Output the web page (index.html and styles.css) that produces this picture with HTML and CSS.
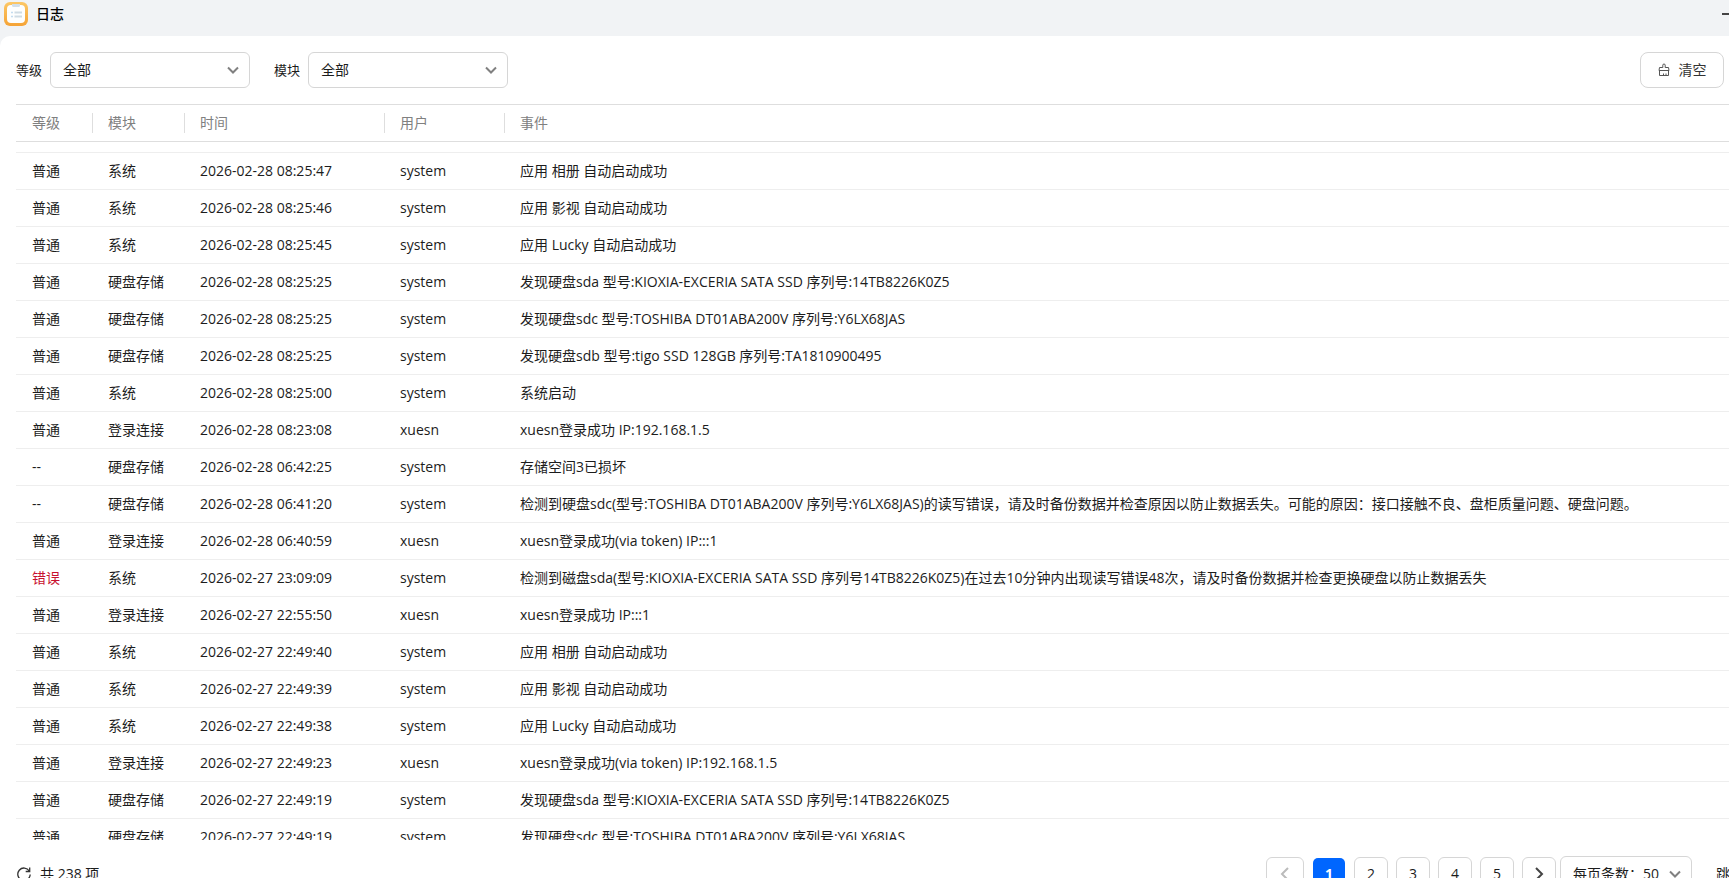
FILE: index.html
```
<!DOCTYPE html>
<html lang="zh-CN">
<head>
<meta charset="utf-8">
<title>日志</title>
<link rel="stylesheet" href="styles.css">
</head>
<body>
<header class="titlebar">
  <svg class="app-icon" width="24" height="24" viewBox="0 0 24 24" aria-hidden="true">
    <defs><linearGradient id="amber" x1="0" y1="0" x2="0" y2="1"><stop offset="0" stop-color="#fcc766"/><stop offset="1" stop-color="#f5a336"/></linearGradient></defs>
    <rect width="24" height="24" rx="6" fill="url(#amber)"/>
    <rect x="3" y="3" width="18" height="18" rx="4" fill="#fdfefe"/>
    <path d="M8 2h8v1.500a1.500 1.500 0 0 1-1.500 1.500h-5A1.500 1.500 0 0 1 8 3.500z" fill="#d3dfe9"/>
    <path d="M7 10.500h2M7 14.500h2" stroke="#c3dcef" stroke-width="1.500"/>
    <path d="M10.500 10.500H18M10.500 14.500H18" stroke="#cfdbe3" stroke-width="2"/>
  </svg>
  <h1 class="title">日志</h1>
  <button class="minimize" type="button" aria-label="Minimize"><svg width="7" height="2" viewBox="0 0 7 2"><path d="M0 1h7" stroke="#444" stroke-width="2"/></svg></button>
</header>
<main class="panel">
  <form class="toolbar">
    <label class="label" for="level">等级</label>
    <span class="select-wrap filter"><select class="select" id="level"><option>全部</option></select><svg class="chevron" width="12" height="8" viewBox="0 0 12 8"><path d="M1 1.500l5 5 5-5" /></svg></span>
    <label class="label second" for="module">模块</label>
    <span class="select-wrap filter"><select class="select" id="module"><option>全部</option></select><svg class="chevron" width="12" height="8" viewBox="0 0 12 8"><path d="M1 1.500l5 5 5-5" /></svg></span>
    <button class="clear" type="button"><svg width="12" height="14" viewBox="0 0 12 14" fill="none" stroke="#555" stroke-width="1"><path d="M4.800 4.500V2.200a1.200 1.200 0 0 1 2.400 0v2.300H10.500l.5 3H1l.5-3zM1.500 7.500v5h9v-5M5.500 12.500v-2M8 12.500v-2"/></svg>清空</button>
  </form>
  <div class="log">
    <table class="table">
      <colgroup><col class="c-level"><col class="c-module"><col class="c-time"><col class="c-user"><col></colgroup>
      <thead><tr><th>等级</th><th>模块</th><th>时间</th><th>用户</th><th>事件</th></tr></thead>
      <tbody>
        <tr class="scrolled"><td colspan="5"></td></tr>
        <tr><td>普通</td><td>系统</td><td>2026-02-28 08:25:47</td><td>system</td><td>应用 相册 自动启动成功</td></tr>
        <tr><td>普通</td><td>系统</td><td>2026-02-28 08:25:46</td><td>system</td><td>应用 影视 自动启动成功</td></tr>
        <tr><td>普通</td><td>系统</td><td>2026-02-28 08:25:45</td><td>system</td><td>应用 Lucky 自动启动成功</td></tr>
        <tr><td>普通</td><td>硬盘存储</td><td>2026-02-28 08:25:25</td><td>system</td><td>发现硬盘sda 型号:KIOXIA-EXCERIA SATA SSD 序列号:14TB8226K0Z5</td></tr>
        <tr><td>普通</td><td>硬盘存储</td><td>2026-02-28 08:25:25</td><td>system</td><td>发现硬盘sdc 型号:TOSHIBA DT01ABA200V 序列号:Y6LX68JAS</td></tr>
        <tr><td>普通</td><td>硬盘存储</td><td>2026-02-28 08:25:25</td><td>system</td><td>发现硬盘sdb 型号:tigo SSD 128GB 序列号:TA1810900495</td></tr>
        <tr><td>普通</td><td>系统</td><td>2026-02-28 08:25:00</td><td>system</td><td>系统启动</td></tr>
        <tr><td>普通</td><td>登录连接</td><td>2026-02-28 08:23:08</td><td>xuesn</td><td>xuesn登录成功 IP:192.168.1.5</td></tr>
        <tr><td>--</td><td>硬盘存储</td><td>2026-02-28 06:42:25</td><td>system</td><td>存储空间3已损坏</td></tr>
        <tr><td>--</td><td>硬盘存储</td><td>2026-02-28 06:41:20</td><td>system</td><td>检测到硬盘sdc(型号:TOSHIBA DT01ABA200V 序列号:Y6LX68JAS)的读写错误，请及时备份数据并检查原因以防止数据丢失。可能的原因：接口接触不良、盘柜质量问题、硬盘问题。</td></tr>
        <tr><td>普通</td><td>登录连接</td><td>2026-02-28 06:40:59</td><td>xuesn</td><td>xuesn登录成功(via token) IP:::1</td></tr>
        <tr><td class="error">错误</td><td>系统</td><td>2026-02-27 23:09:09</td><td>system</td><td>检测到磁盘sda(型号:KIOXIA-EXCERIA SATA SSD 序列号14TB8226K0Z5)在过去10分钟内出现读写错误48次，请及时备份数据并检查更换硬盘以防止数据丢失</td></tr>
        <tr><td>普通</td><td>登录连接</td><td>2026-02-27 22:55:50</td><td>xuesn</td><td>xuesn登录成功 IP:::1</td></tr>
        <tr><td>普通</td><td>系统</td><td>2026-02-27 22:49:40</td><td>system</td><td>应用 相册 自动启动成功</td></tr>
        <tr><td>普通</td><td>系统</td><td>2026-02-27 22:49:39</td><td>system</td><td>应用 影视 自动启动成功</td></tr>
        <tr><td>普通</td><td>系统</td><td>2026-02-27 22:49:38</td><td>system</td><td>应用 Lucky 自动启动成功</td></tr>
        <tr><td>普通</td><td>登录连接</td><td>2026-02-27 22:49:23</td><td>xuesn</td><td>xuesn登录成功(via token) IP:192.168.1.5</td></tr>
        <tr><td>普通</td><td>硬盘存储</td><td>2026-02-27 22:49:19</td><td>system</td><td>发现硬盘sda 型号:KIOXIA-EXCERIA SATA SSD 序列号:14TB8226K0Z5</td></tr>
        <tr><td>普通</td><td>硬盘存储</td><td>2026-02-27 22:49:19</td><td>system</td><td>发现硬盘sdc 型号:TOSHIBA DT01ABA200V 序列号:Y6LX68JAS</td></tr>
      </tbody>
    </table>
  </div>
  <footer class="footer">
    <button class="refresh" type="button" aria-label="刷新"><svg width="16" height="16" viewBox="0 0 16 16" fill="none" stroke="#333" stroke-width="1.300"><path d="M13.300 5A6.200 6.200 0 1 0 14.200 8.500M13.700 1.500v4h-4"/></svg></button>
    <span class="total">共 238 项</span>
    <nav class="pager" aria-label="分页">
      <button class="page prev" type="button" aria-label="上一页" disabled><svg width="10" height="14" viewBox="0 0 10 14"><path d="M8 1L2 7l6 6"/></svg></button>
      <button class="page current" type="button">1</button>
      <button class="page" type="button">2</button>
      <button class="page" type="button">3</button>
      <button class="page" type="button">4</button>
      <button class="page" type="button">5</button>
      <button class="page next" type="button" aria-label="下一页"><svg width="10" height="14" viewBox="0 0 10 14"><path d="M2 1l6 6-6 6"/></svg></button>
    </nav>
    <span class="select-wrap size"><select class="select" aria-label="每页条数"><option>每页条数：50</option></select><svg class="chevron" width="12" height="8" viewBox="0 0 12 8"><path d="M1 1.500l5 5 5-5" /></svg></span>
    <span class="jump">跳</span>
  </footer>
</main>
</body>
</html>
```
FILE: styles.css
```
* { box-sizing: border-box; }
body {
  margin: 0;
  height: 100vh;
  overflow: hidden;
  display: flex;
  flex-direction: column;
  background: #f1f3f5;
  color: #1c1c1c;
  font: 14px/20px "Open Sans", "Noto Sans CJK SC", sans-serif;
}
button, select { font: inherit; color: inherit; margin: 0; }
svg { display: block; flex: none; }

.titlebar {
  flex: none;
  height: 36px;
  display: flex;
  align-items: center;
  gap: 8px;
  padding: 0 0 8px 4px;
}
.title { margin: 0; font-size: 14px; line-height: 20px; font-weight: 500; color: #000; }
.minimize { margin-left: auto; padding: 0; border: 0; background: none; }

.panel {
  flex: 1;
  min-height: 0;
  display: flex;
  flex-direction: column;
  padding-left: 16px;
  background: #fff;
  border-top-left-radius: 10px;
}
.toolbar {
  flex: none;
  display: flex;
  align-items: center;
  gap: 8px;
  padding: 16px 5px 16px 0;
}
.label { font-size: 13px; }
.second { margin-left: 16px; }
.select-wrap { position: relative; flex: none; height: 36px; }
.filter { width: 200px; }
.size { width: 132px; }
.select {
  width: 100%;
  height: 100%;
  padding: 0 12px;
  border: 1px solid #d6d6d6;
  border-radius: 6px;
  background: #fff;
  appearance: none;
}
.chevron {
  position: absolute;
  top: 14px;
  right: 11px;
  fill: none;
  stroke: #808080;
  stroke-width: 2;
  pointer-events: none;
}
.clear {
  margin-left: auto;
  width: 84px;
  height: 36px;
  display: flex;
  align-items: center;
  justify-content: center;
  gap: 9px;
  padding: 0;
  border: 1px solid #d6d6d6;
  border-radius: 8px;
  background: #fff;
  color: #333;
}

.log { flex: 1; min-height: 0; overflow: hidden; }
.table {
  width: 100%;
  table-layout: fixed;
  border-spacing: 0;
}
.c-level { width: 76px; }
.c-module { width: 92px; }
.c-time { width: 200px; }
.c-user { width: 120px; }
.table th {
  position: relative;
  height: 38px;
  padding: 0 0 0 16px;
  border-top: 1px solid #dedede;
  border-bottom: 1px solid #dedede;
  text-align: left;
  font-weight: 400;
  color: #808080;
}
.table th + th::before {
  content: "";
  position: absolute;
  left: 0;
  top: 8px;
  bottom: 8px;
  width: 1px;
  background: #dedede;
}
.table td {
  height: 37px;
  padding: 0 0 0 16px;
  border-bottom: 1px solid #eee;
  white-space: nowrap;
}
.table .scrolled td { height: 11px; }
.table .error { color: #c8102e; }

.footer {
  flex: none;
  height: 38px;
  display: flex;
  align-items: flex-start;
  padding-top: 16px;
}
.refresh { height: 36px; padding: 0; border: 0; background: none; }
.total { margin-left: 8px; line-height: 36px; }
.pager { margin-left: auto; display: flex; gap: 8px; padding-top: 1px; }
.page {
  width: 34px;
  height: 34px;
  padding: 0;
  display: flex;
  align-items: center;
  justify-content: center;
  border: 1px solid #d6d6d6;
  border-radius: 6px;
  background: #fff;
}
.page svg { fill: none; stroke: #444; stroke-width: 2; }
.prev { width: 38px; }
.page.prev svg { stroke: #bbb; }
.current {
  border-color: transparent;
  background: #0066ff;
  background-clip: padding-box;
  color: #fff;
  font-weight: 700;
}
.size { margin-left: 4px; }
.jump { flex: 0 0 13px; margin-left: 24px; overflow: hidden; line-height: 36px; }
```
